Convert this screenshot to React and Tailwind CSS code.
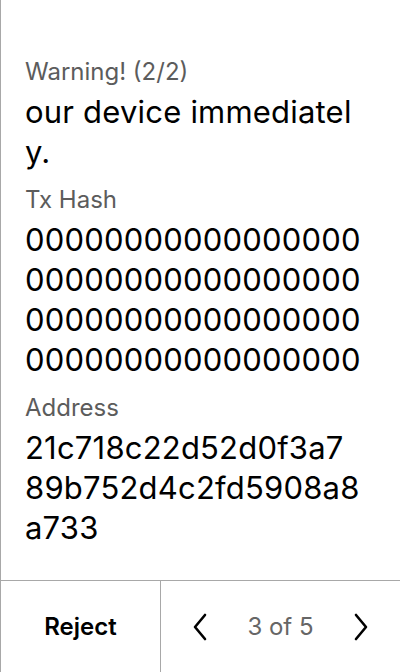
import React from 'react';

// the device screen wraps values at a fixed character count, so lines are given as they appear
const fields = [
    { label: 'Warning! (2/2)', lines: ['our device immediatel', 'y.'] },
    { label: 'Tx Hash', lines: ['0'.repeat(17), '0'.repeat(17), '0'.repeat(17), '0'.repeat(17)] },
    { label: 'Address', lines: ['21c718c22d52d0f3a7', '89b752d4c2fd5908a8', 'a733'] },
];

const Field = ({ label, lines }) => (
    <div className="flex flex-col gap-1">
        <div className="text-[24px] leading-[32px] text-[#5c5c5c]">{label}</div>
        <div className="text-[31px] leading-[40px] tracking-[0.2px] text-black">
            {lines.map((line, i) => (
                <div key={i} className="whitespace-nowrap">{line}</div>
            ))}
        </div>
    </div>
);

const Chevron = ({ dir }) => (
    <svg width="16" height="28" viewBox="0 0 16 28" fill="none" stroke="black" strokeWidth="2.6" strokeLinecap="round" strokeLinejoin="round">
        {dir === 'left' ? <path d="M13 2 L3 14 L13 26" /> : <path d="M3 2 L13 14 L3 26" />}
    </svg>
);

const App = () => {
    return (
        <div className="w-[400px] h-[672px] bg-white border-l border-[#a8a8a8] flex flex-col" style={{ fontFamily: 'Inter, "Noto Sans", sans-serif' }}>
            <div className="flex-1 flex flex-col gap-3 pt-14 pl-6 pr-6 overflow-hidden">
                {fields.map((f) => (
                    <Field key={f.label} label={f.label} lines={f.lines} />
                ))}
            </div>
            <div className="h-[92px] border-t border-[#a8a8a8] flex">
                <button className="w-[160px] border-r border-[#a8a8a8] flex items-center justify-center text-[24px] font-semibold text-black">
                    Reject
                </button>
                <div className="flex-1 flex items-center justify-between px-[31px]">
                    <Chevron dir="left" />
                    <span className="text-[24px] text-[#666666]">3 of 5</span>
                    <Chevron dir="right" />
                </div>
            </div>
        </div>
    );
};

export default App;
